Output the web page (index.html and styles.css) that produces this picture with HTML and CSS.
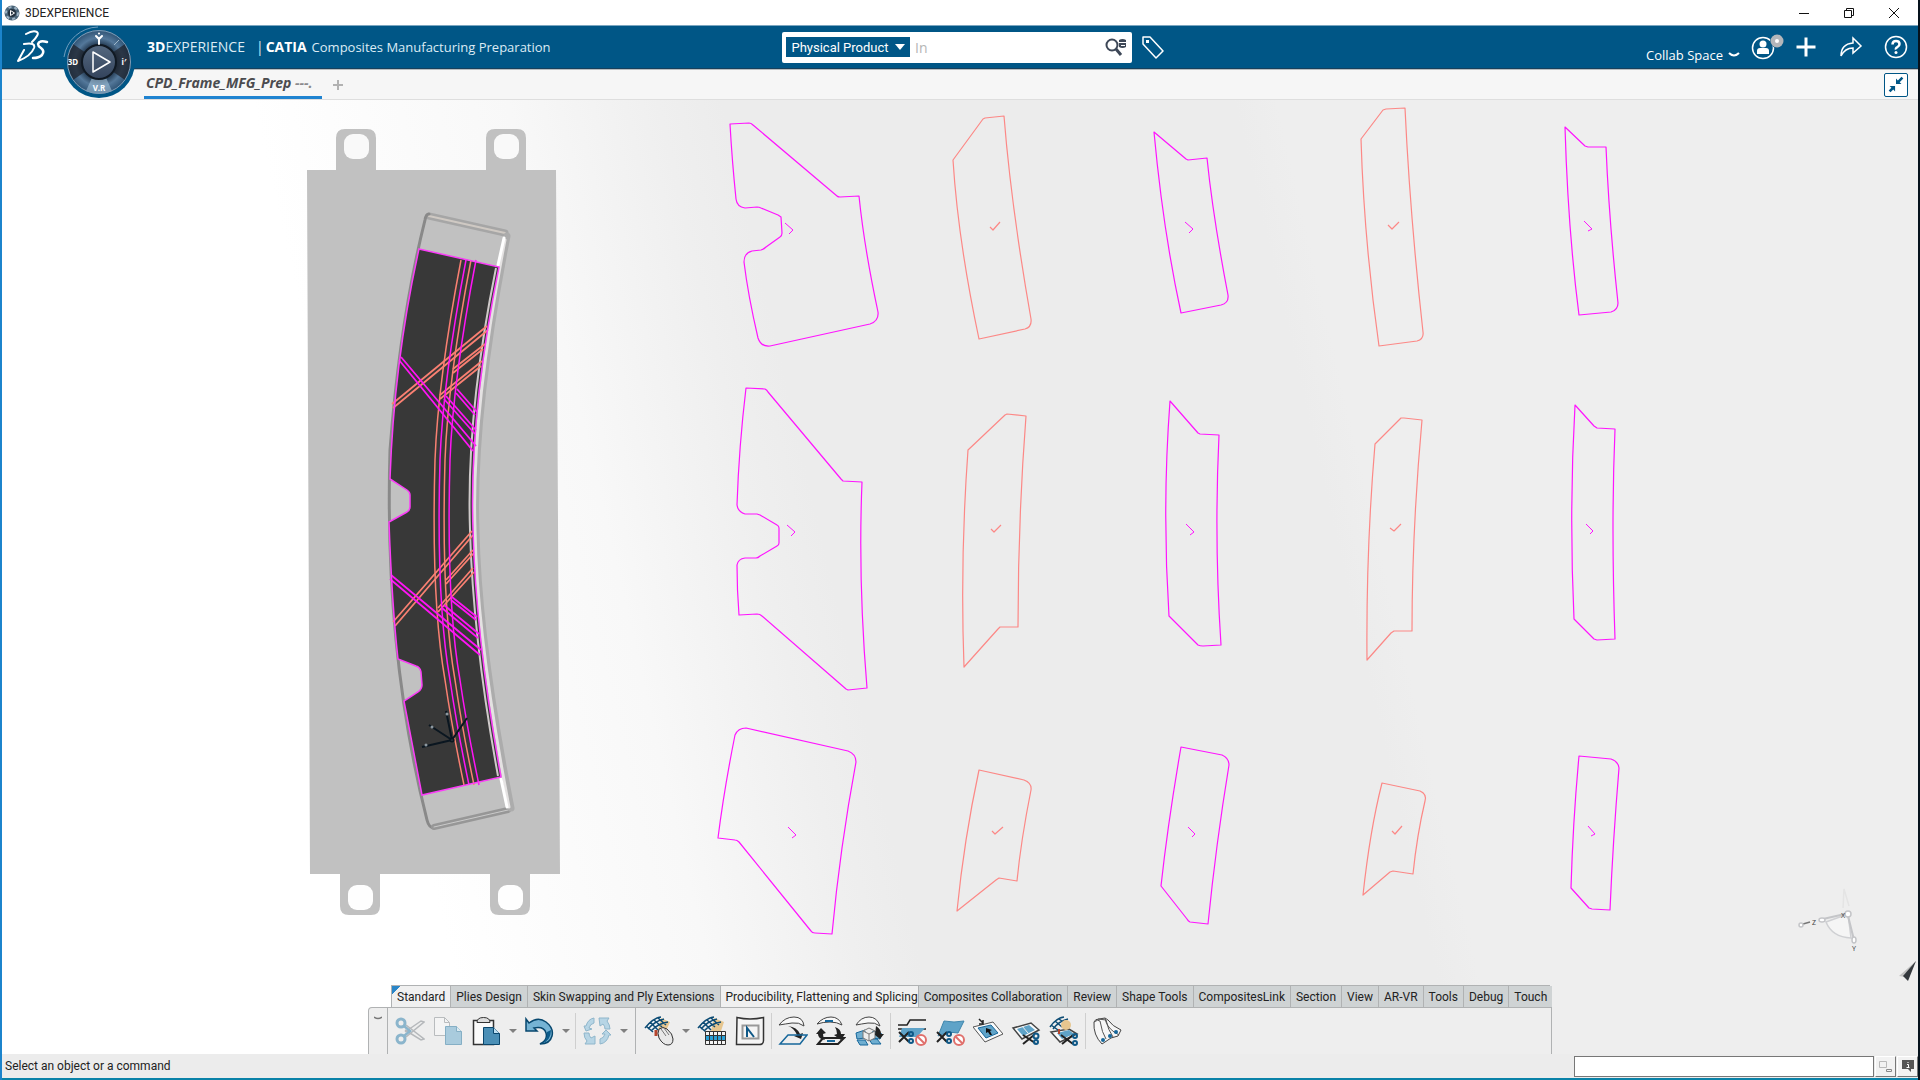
FILE: index.html
```
<!DOCTYPE html>
<html lang="en">
<head>
<meta charset="utf-8">
<title>3DEXPERIENCE</title>
<link rel="stylesheet" href="styles.css">
</head>
<body>
<div class="titlebar">
  <svg class="app-icon" viewBox="0 0 16 16"><circle cx="8" cy="8" r="7.500" fill="#4a6478"/><circle cx="8" cy="8" r="6" fill="none" stroke="#9fb4c4" stroke-width="2" stroke-dasharray="3 3"/><circle cx="8" cy="8" r="4" fill="#23313f"/><path d="M6.500 5.500l4 2.500l-4 2.500z" fill="none" stroke="#fff"/></svg>
  <span class="window-title">3DEXPERIENCE</span>
  <button class="win-btn" aria-label="Minimize"><svg viewBox="0 0 12 12"><path d="M1 6.500h10" stroke="#111"/></svg></button>
  <button class="win-btn" aria-label="Restore"><svg viewBox="0 0 12 12" fill="none" stroke="#111"><path d="M1.500 3.500h7v7h-7zM3.500 3.500v-2h7v7h-2"/></svg></button>
  <button class="win-btn" aria-label="Close"><svg viewBox="0 0 12 12"><path d="M1 1l10 10M11 1l-10 10" stroke="#111"/></svg></button>
</div>

<header class="topbar">
  <svg class="ds-logo" viewBox="0 0 32 34" fill="none" stroke="#fff" stroke-linecap="round" stroke-linejoin="round"><path d="M9 4q7-4 11-2q3 2-5 10" stroke-width="2"/><path d="M7 14q12-2 10 4q-3 8-16 13l6-11" stroke-width="2"/><path d="M30 12q-8-2-9 2q0 2 3 4q4 3 1 7q-3 3-9 3" stroke-width="2.500"/></svg>
  <button class="compass" aria-label="Compass">
    <svg viewBox="0 0 74 74">
      <defs>
        <radialGradient id="ring" cx=".5" cy=".5" r=".5"><stop offset=".5" stop-color="#1c3046"/><stop offset=".75" stop-color="#54789a"/><stop offset="1" stop-color="#2f5273"/></radialGradient>
        <linearGradient id="core" x1="0" y1="0" x2="0" y2="1"><stop offset="0" stop-color="#55687f"/><stop offset="1" stop-color="#33435c"/></linearGradient>
      </defs>
      <path d="M1 37a36 36 0 0 0 72 0z" fill="#005686"/>
      <path d="M2 32A35 35 0 0 1 36 2" fill="none" stroke="#6f9dbd"/>
      <circle cx="37" cy="37" r="32" fill="url(#ring)"/>
      <path d="M37 37L11 19A32 32 0 0 0 11 55zM37 37L63 19A32 32 0 0 1 63 55z" fill="#1d222b" opacity=".75"/>
      <path d="M37 37L24 66A32 32 0 0 0 50 66z" fill="#a9c8de" opacity=".55"/>
      <circle cx="37" cy="37" r="31.500" fill="none" stroke="#7b9db9"/>
      <circle cx="37" cy="37" r="17" fill="url(#core)" stroke="#101923" stroke-width="2"/>
      <path d="M31 27l17 10l-17 10z" fill="none" stroke="#fff" stroke-width="1.500" stroke-linejoin="round"/>
      <g class="compass-text"><text x="37" y="66">V.R</text><text x="11" y="40">3D</text><text x="62" y="40">i&#8242;</text></g>
      <path d="M37 8.500v0M34 11l3 3l3-3M37 14v5" stroke="#fff" stroke-width="2" fill="none" stroke-linecap="round"/>
      <path d="M52 20l5-5" stroke="#9fb6c8" stroke-width="1"/>
    </svg>
  </button>
  <h1 class="brand"><span><b>3D</b>EXPERIENCE</span> <span class="bar">|</span><b>CATIA</b> <span class="app-name">Composites Manufacturing Preparation</span></h1>
  <form class="search">
    <button type="button" class="scope">Physical Product <svg viewBox="0 0 10 6"><path d="M0 0h10l-5 6z" fill="#fff"/></svg></button>
    <input type="text" placeholder="In" aria-label="Search">
    <button type="button" class="find" aria-label="Find"><svg viewBox="0 0 22 20"><circle cx="7" cy="8" r="5.500" fill="none" stroke="#3d4757" stroke-width="2"/><path d="M11 12l5 6" stroke="#3d4757" stroke-width="3"/><path d="M14 3q3.500-2 7 0v7q-3.500 2-7 0z" fill="#3d4757"/><path d="M14 5.500h7M16 8.500h4" stroke="#fff"/></svg></button>
  </form>
  <button class="icon-btn tag" aria-label="Tags"><svg viewBox="0 0 24 24"><path d="M2 2h7l13 14l-7 7l-13-14z" fill="none" stroke="#fff" stroke-width="1.500" stroke-linejoin="round"/><path d="M5 5h3v3h-3z" fill="#fff"/></svg></button>
  <div class="account">
    <button class="space">Collab Space <svg viewBox="0 0 12 6"><path d="M1 1q5 5 10 0" fill="none" stroke="#fff" stroke-width="2"/></svg></button>
    <button class="icon-btn user" aria-label="Account"><svg viewBox="0 0 34 28"><circle cx="13" cy="15" r="10.500" fill="none" stroke="#fff" stroke-width="1.500"/><circle cx="13" cy="11" r="3.500" fill="#fff"/><path d="M7 21v-3q0-3 3-3h6q3 0 3 3v3z" fill="#fff"/><circle cx="27" cy="8" r="7" fill="#005686"/><circle cx="27" cy="8" r="6.500" fill="#b4b6ba"/><circle cx="27" cy="8" r="2" fill="#fff"/></svg></button>
    <button class="icon-btn" aria-label="Add"><svg viewBox="0 0 24 24"><path d="M12 2.500v19M2.500 12h19" stroke="#fff" stroke-width="3"/></svg></button>
    <button class="icon-btn" aria-label="Share"><svg viewBox="0 0 24 24"><path d="M2 21q0-12 12-13v-5l8 8l-8 7v-5q-8 0-12 8z" fill="none" stroke="#fff" stroke-width="1.500"/></svg></button>
    <button class="icon-btn" aria-label="Help"><svg viewBox="0 0 24 24"><circle cx="12" cy="12" r="10.500" fill="none" stroke="#fff" stroke-width="1.500"/><path d="M8.500 9.500q0-3.500 3.500-3.500t3.500 3q0 2-2 3t-1.500 2.500" fill="none" stroke="#fff" stroke-width="2.500"/><circle cx="12" cy="17.500" r="1.500" fill="#fff"/></svg></button>
  </div>
</header>

<nav class="doc-tabs">
  <a class="doc-tab" href="#">CPD_Frame_MFG_Prep <span>---.</span></a>
  <button class="new-tab" aria-label="New tab"><svg viewBox="0 0 10 10"><path d="M5 0v10M0 5h10" stroke="#b2b2b2" stroke-width="2"/></svg></button>
  <button class="collapse" aria-label="Collapse"><svg viewBox="0 0 24 24" fill="#005686"><path d="M12 5v6h6l-2-2l4-4l-2-2l-4 4zM11 19v-6h-6l2 2l-3 3l2 2l3-3z"/></svg></button>
</nav>

<main class="stage">
  <svg class="scene" viewBox="2 100 1916 954" preserveAspectRatio="xMinYMin slice" aria-label="3D view">
    <defs>
      <path id="band" d="M461 260Q438 380 435 460Q431 600 445 680Q452 728 464 785"/>
      <path id="ply" d="M419 249L499 267Q469 415 473 530Q476 640 501 777L422 795Q412 742 404 701L418 692Q422 689 422 685L421 672Q420 667 416 666L398 659Q392 605 389 522L407 512Q410 510 410 507V495Q410 492 407 490L390 479Q394 362 419 249z"/>
    </defs>
    <!-- tool plate with four lugs -->
    <g fill="#c1c1c1">
      <path d="M307 170H336V138Q336 129 345 129H367Q376 129 376 138V170H486V138Q486 129 495 129H517Q526 129 526 138V170H556L560 874H530V906Q530 915 521 915H499Q490 915 490 906V874H380V906Q380 915 371 915H349Q340 915 340 906V874H310z"/>
    </g>
    <g fill="#f9f9f9"><rect x="344" y="134" width="25" height="25" rx="9"/><rect x="494" y="134" width="25" height="25" rx="9"/></g>
    <g fill="#fefefe"><rect x="348" y="885" width="25" height="25" rx="9"/><rect x="498" y="885" width="25" height="25" rx="9"/></g>
    <!-- frame mould -->
    <g fill="none" stroke-linejoin="round" stroke-linecap="round">
      <path d="M429 216L505 233" stroke="#a6a6a6" stroke-width="7"/>
      <path d="M429 216L505 233" stroke="#cfc9c3" stroke-width="2"/>
      <path d="M429 214Q426 214 425 220Q400 320 390 450Q384 650 427 820Q429 828 434 828" stroke="#898989" stroke-width="3"/>
      <path d="M434 827L508 810" stroke="#979797" stroke-width="6"/>
      <path d="M434 827L508 810" stroke="#cacaca"/>
      <path d="M507 236Q472 415 476 530Q478 640 511 808" stroke="#acacac" stroke-width="7"/>
      <path d="M505 240Q471 415 475 530Q477 640 509 807" stroke="#e4e2e2" stroke-width="3"/>
      <path d="M504 238L498 265M507 807L501 779" stroke="#fff" stroke-width="3"/>
    </g>
    <use href="#ply" fill="#383838"/>
    <path d="M496 268Q466 415 470 530Q473 640 498 776" fill="none" stroke="#cfcaca" stroke-width="2"/>
    <g fill="none" stroke="#fa8072">
      <g stroke-width="1.500"><use href="#band"/><use href="#band" x="10"/></g>
      <path stroke-width="1.800" d="M392 404L487 326M393 408L488 330M453 369L485 344M453 373L483 349M440 395L482 361M440 399L481 366M393 622L472 531M395 626L473 535M446 580L473 550M446 584L474 553M438 608L473 568M438 612L474 572"/>
    </g>
    <g fill="none" stroke="#ff14f5">
      <g stroke-width="1.500"><use href="#band" x="5"/><use href="#band" x="15"/></g>
      <path stroke-width="1.800" d="M401 357L476 446M399 360L473 451M457 389L477 412M456 393L475 415M446 396L476 430M444 399L475 434M391 575L481 650M390 579L480 655M452 597L477 617M451 600L476 620M444 605L479 634M442 608L478 638"/>
      <use href="#ply" stroke="#fb3cf8" stroke-width="1.500"/>
    </g>
    <!-- local axis system -->
    <g stroke="#0a1620" stroke-width="2" fill="#717c85"><path d="M452 740L446 711M452 740L429 725M452 740L422 747M452 740L467 718"/><circle cx="452" cy="740" r="1.500"/><path d="M447 714v0M432 727v0M426 745v0" stroke="#8d98a0" stroke-width="3" stroke-linecap="round"/></g>

    <!-- flattened plies -->
    <g fill="none" stroke="#ff14ff" stroke-width="1.200" stroke-linejoin="round">
      <path d="M730 124L749 123Q751 123 753 125L837 196Q838 197 840 197L859 196Q864 246 878 312Q879 321 870 324L770 346Q761 347 758 338Q748 295 744 262Q744 253 752 251L761 250Q764 249 766 247L780 237Q782 236 782 233L781 217L778 215L761 208Q759 207 757 207L745 208Q737 207 736 199Q732 160 730 124z"/>
      <path d="M1154 132L1186 159L1188 160L1207 158Q1213 217 1228 295Q1229 303 1221 305L1181 313Q1163 230 1154 132z"/>
      <path d="M746 388L765 389Q767 390 768 392L841 479L843 481L862 482Q858 580 867 688L848 690L846 689L762 616Q760 614 757 614L739 615Q737 590 737 565Q738 559 745 558H756Q758 558 760 556L777 546Q779 545 779 543V528Q779 526 777 525L760 515L757 514H745Q738 512 737 505Q739 446 746 388z"/>
      <path d="M1170 401L1198 433L1200 434L1219 435Q1214 540 1221 645L1203 646Q1200 646 1198 645L1169 616Q1162 508 1170 401z"/>
      <path d="M746 728L848 751Q856 754 856 762Q840 848 832 934L815 933Q812 933 811 931L739 842Q737 840 735 840L718 838Q724 790 735 735Q738 728 746 728z"/>
      <path d="M1181 747L1222 755Q1229 758 1229 765Q1216 844 1208 924L1190 922Q1188 921 1187 919L1161 886Q1168 822 1181 747z"/>
      <path d="M1565 127L1585 146L1588 147L1606 147Q1609 220 1618 303Q1618 310 1611 312L1579 315Q1568 230 1565 127z"/>
      <path d="M1575 405L1594 426L1597 428L1615 429Q1611 525 1615 639L1597 640L1594 639L1574 619Q1569 510 1575 405z"/>
      <path d="M1579 756L1611 759Q1618 761 1619 768Q1613 840 1610 910L1592 909L1589 908L1571 888Q1573 820 1579 756z"/>
      <path stroke-width="1" d="M785 223L793 230L789 234M1185 222L1193 229L1189 233M787 525L795 532L791 536M1186 524L1194 532L1190 535M788 827L796 835L792 838M1188 827L1195 834L1192 837M1584 221L1592 229L1588 231M1586 524L1593 531L1590 534M1588 826L1595 834L1591 836"/>
    </g>
    <g fill="none" stroke="#fc8886" stroke-width="1.200" stroke-linejoin="round">
      <path d="M953 160L983 119L985 118L1004 116Q1011 205 1031 319Q1032 327 1025 329L979 339Q958 240 953 160z"/>
      <path d="M968 450L1005 415L1007 414L1026 416Q1018 520 1018 627H1000L998 629L964 667Q960 560 968 450z"/>
      <path d="M979 770L1024 780Q1032 783 1031 790Q1021 840 1017 881L999 878L996 880L957 911Q964 840 979 770z"/>
      <path d="M1361 139L1383 110L1386 109L1405 108Q1410 215 1423 332Q1424 339 1417 341L1379 346Q1364 240 1361 139z"/>
      <path d="M1375 444L1401 418L1404 418L1422 420Q1412 530 1412 631H1394L1391 633L1367 660Q1366 550 1375 444z"/>
      <path d="M1382 783L1420 791Q1427 794 1425 801Q1417 835 1413 874L1393 871L1390 872L1363 895Q1370 830 1382 783z"/>
      <path d="M990 227L993 230L1000 222M991 529L994 532L1001 525M992 831L995 834L1003 827M1388 225L1392 229L1399 222M1390 528L1394 531L1401 524M1392 831L1395 834L1402 826"/>
    </g>
    <!-- view orientation triad -->
    <g fill="none" stroke="#c4c5c8" stroke-width="1.500">
      <path d="M1826 922Q1832 937 1851 938L1848 914z" fill="#f5f5f5" stroke="#cfd0d3"/>
      <path d="M1823 919L1845 914" stroke-width="2"/><path d="M1848 916L1854 940" stroke-width="2"/>
      <path d="M1843 908L1844 889L1849 906" stroke="#e4e4e4"/>
      <path d="M1803 924L1810 922" stroke="#777"/>
      <circle cx="1801" cy="925" r="2" fill="#fff"/><circle cx="1848" cy="914" r="3" fill="#fff"/><ellipse cx="1822" cy="920" rx="3" ry="2" fill="#fff"/><ellipse cx="1854" cy="940" rx="2" ry="3" fill="#fff"/>
    </g>
    <g class="axis-label"><text x="1812" y="925">Z</text><text x="1841" y="918">X</text><text x="1852" y="951">Y</text></g>
    <path d="M1916 961L1899 976L1905 977z" fill="#c2c2c2"/><path d="M1916 961L1903 976L1908 981z" fill="#34383d"/>
  </svg>

  <section class="actionbar">
    <nav class="sections">
      <button class="section active first">Standard</button>
      <button class="section">Plies Design</button>
      <button class="section">Skin Swapping and Ply Extensions</button>
      <button class="section active long">Producibility, Flattening and Splicing</button>
      <button class="section">Composites Collaboration</button>
      <button class="section">Review</button>
      <button class="section">Shape Tools</button>
      <button class="section">CompositesLink</button>
      <button class="section">Section</button>
      <button class="section">View</button>
      <button class="section">AR-VR</button>
      <button class="section">Tools</button>
      <button class="section">Debug</button>
      <button class="section">Touch</button>
    </nav>
    <div class="tools">
      <button class="handle" aria-label="Hide toolbar"><svg viewBox="0 0 8 4"><path d="M0 1q4 3 8 0" fill="none" stroke="#777" stroke-width="1.500"/></svg></button>
      <button class="tool" aria-label="Cut"><svg viewBox="0 0 30 30" fill="none"><path d="M11 9L29 23L26 24L10 14M11 21L29 6L26 5L10 16" stroke="#b5b8bb" stroke-width="1.500"/><circle cx="6" cy="7" r="4" stroke="#8bb5cc" stroke-width="3"/><circle cx="6" cy="23" r="4" stroke="#8bb5cc" stroke-width="3"/><path d="M9 10l6 5l-6 5" stroke="#8bb5cc" stroke-width="2.500"/></svg></button>
      <button class="tool" aria-label="Copy"><svg viewBox="0 0 30 30"><path d="M1.500 1.500h10l5 5v13h-15z" fill="#f4f4f4" stroke="#b9bcbe"/><path d="M11.500 1.500v5h5" fill="none" stroke="#b9bcbe"/><path d="M12.500 10.500h11l5 5v13h-16z" fill="#a9cbdd" stroke="#85afc5"/><path d="M23.500 10.500v5h5" fill="#dcebf2" stroke="#85afc5"/></svg></button>
      <button class="tool" aria-label="Paste"><svg viewBox="0 0 30 30"><path d="M2.500 4.500h20v24h-20z" fill="#fafafa" stroke="#333" stroke-width="1.500"/><path d="M6 6.500q0-5 6.500-5t6.500 5z" fill="#ddd" stroke="#333"/><path d="M12.500 11.500h10l6 6v11h-16z" fill="#4b8fb6" stroke="#0a466c"/><path d="M22.500 11.500v6h6" fill="#bfe0f1" stroke="#0a466c"/></svg></button>
      <button class="more" aria-label="Paste options"><svg viewBox="0 0 8 4"><path d="M0 0h8l-4 4z"/></svg></button>
      <button class="tool" aria-label="Undo"><svg viewBox="0 0 30 30"><path d="M2 3l3 4q9-7 17-1t6 14t-12 8q8-4 6-11t-12-5l3 3H2z" fill="#75b3d4" stroke="#07476e" stroke-width="1.500"/><path d="M27 14q0 11-10 14q7-4 6-12z" fill="#0d5c8b"/></svg></button>
      <button class="more" aria-label="Undo options"><svg viewBox="0 0 8 4"><path d="M0 0h8l-4 4z"/></svg></button>
      <span class="rule"></span>
      <button class="tool" aria-label="Update"><svg viewBox="0 0 30 30"><g fill="#b7d5e5" stroke="#8fb6cb"><path d="M12 2v5q-4 1-5 5l3 1l-6 2l-2-5h2q2-7 8-8z"/><path d="M17 2h10l-2 3q3 4 3 8h-5q0-3-2-5l-3 2z"/><path d="M18 28v-5q4-1 5-5h-3l4-4l5 5h-2q-2 8-9 9z"/><path d="M13 28H3l2-3q-3-3-3-8h5q0 3 2 5l4-2z"/></g></svg></button>
      <button class="more" aria-label="Update options"><svg viewBox="0 0 8 4"><path d="M0 0h8l-4 4z"/></svg></button>
      <span class="rule full"></span>
      <button class="tool" aria-label="Hand draping"><svg viewBox="0 0 30 30"><path d="M1 13Q8 1 17 1l10 4l-6 10l-9 1z" fill="#f1f5f7"/><path d="M17 2l9 4l-4 9l-8-1z" fill="#e6c68f"/><path d="M1 12Q9 2 17 1M4 13Q11 5 20 3M7 15Q13 8 24 6M2 10l7 6M6 6l8 8M10 4l8 7M14 2l8 7" stroke="#0c4b74" stroke-width="1.500" fill="none"/><path d="M12 14v6" stroke="#b5452d" stroke-width="3"/><path d="M15 13q4-3 8 0q6 5 6 10q0 6-5 6t-9-7q-2-5 0-9z" fill="#e8e8e8" stroke="#333"/><path d="M17 13l5 7M20 12l5 7" stroke="#777"/></svg></button>
      <button class="more" aria-label="Draping options"><svg viewBox="0 0 8 4"><path d="M0 0h8l-4 4z"/></svg></button>
      <button class="tool" aria-label="Producibility table"><svg viewBox="0 0 30 30"><path d="M17 2l10 4l-3 9h-10z" fill="#e6c68f"/><path d="M1 12Q9 2 17 1M4 13Q11 5 20 3M7 15Q13 8 24 6M2 10l7 6M6 6l8 8M10 4l8 7M14 2l8 7" stroke="#0c4b74" stroke-width="1.500" fill="none"/><path d="M8.500 15.500h20v13h-20z" fill="#f5f5f5" stroke="#333"/><path d="M9 20h19v4H9z" fill="#2aa0d6"/><path d="M8 19.500h20M8 24.500h20M12.500 15v13M16.500 15v13M20.500 15v13M24.500 15v13" stroke="#333"/></svg></button>
      <button class="tool" aria-label="Flattening"><svg viewBox="0 0 30 30"><path d="M2 1.500q13 3 26.500 0v23q0 4-4 4H1.500z" fill="#f5f5f5" stroke="#333" stroke-width="1.500"/><path d="M7.500 9.500h16v13h-16z" fill="none" stroke="#999" stroke-width="2"/><path d="M12 21v-9l7 9" fill="none" stroke="#0f5887" stroke-width="2"/></svg></button>
      <span class="rule"></span>
      <button class="tool" aria-label="Flatten geometry"><svg viewBox="0 0 30 30"><path d="M1 9Q7 1 16 1t10 9q-5-4-12-3T1 9z" fill="#f8f8f8" stroke="#444"/><path d="M10 10q9 1 12 8l3-1l-2 6l-7-3l3-1q-3-7-9-9z" fill="#222"/><path d="M2 28l8-9h19l-7 9z" fill="none" stroke="#16679b" stroke-width="1.500"/></svg></button>
      <button class="tool" aria-label="Transfer geometry"><svg viewBox="0 0 30 30"><path d="M1 8Q7 1 15 1t11 8q-5-3-12-3T1 8z" fill="#f8f8f8" stroke="#444"/><path d="M9 5h8" stroke="#16679b" stroke-width="2"/><path d="M19 11q6 2 6 7h4l-4 6l-7-5l3-1q0-4-2-7zM9 24q-7-1-7-6h-2l5-6l5 5l-3 1q0 4 2 6z" fill="#222"/><path d="M2 28l5-6h21l-6 6z" fill="none" stroke="#222" stroke-width="2"/><path d="M11 25h8" stroke="#16679b" stroke-width="2"/></svg></button>
      <button class="tool" aria-label="Unfold body"><svg viewBox="0 0 30 30"><path d="M2 9Q7 1 15 1t11 9q-5-4-12-3T2 9z" fill="#f8f8f8" stroke="#444"/><path d="M2 17l9-3v8l-8 1zM19 15l9 3l-2 5l-8-1zM3 24h8l3 5h-8zM15 23h8l4 5h-9z" fill="#6faed0" stroke="#16679b"/><path d="M9 15l6-3l6 3v7l-6 3l-6-3zM9 15l6 3l6-3M15 18v7" fill="#eee" stroke="#777"/><path d="M22 10q5 3 5 8h3l-4 5l-5-4z" fill="#222"/></svg></button>
      <span class="rule"></span>
      <button class="tool" aria-label="No splice"><svg viewBox="0 0 30 30"><path d="M1 9h9l3-5h16M1 13h28" fill="none" stroke="#222" stroke-width="1.500"/><path d="M5 12h23l-8 9H2z" fill="#5fa3c8"/><path d="M2 16l10 10M2 26l10-10" stroke="#222" stroke-width="2"/><circle cx="14" cy="18" r="2" fill="none" stroke="#0f5887" stroke-width="2"/><circle cx="14" cy="25" r="2" fill="none" stroke="#0f5887" stroke-width="2"/><circle cx="24" cy="24" r="5" fill="#fff" stroke="#e0706c" stroke-width="2"/><path d="M20 20l8 8" stroke="#e0706c" stroke-width="2"/></svg></button>
      <button class="tool" aria-label="No cut zone"><svg viewBox="0 0 30 30"><path d="M9 5q10 2 20 0l-6 12q-10-2-20 3z" fill="#5fa3c8" stroke="#3f86ac"/><path d="M2 16l10 10M2 26l10-10" stroke="#222" stroke-width="2"/><circle cx="14" cy="18" r="2" fill="none" stroke="#0f5887" stroke-width="2"/><circle cx="14" cy="25" r="2" fill="none" stroke="#0f5887" stroke-width="2"/><circle cx="24" cy="24" r="5" fill="#fff" stroke="#e0706c" stroke-width="2"/><path d="M20 20l8 8" stroke="#e0706c" stroke-width="2"/></svg></button>
      <button class="tool" aria-label="Place ply"><svg viewBox="0 0 30 30"><path d="M0 11l20-5l10 12l-18 8z" fill="#fbfbfb" stroke="#555"/><path d="M5 12l13-3l7 8l-12 5z" fill="#5fa3c8" stroke="#16679b"/><path d="M6 3l4 4M10 4v4h-4" stroke="#222" stroke-width="1.500" fill="none"/><path d="M13 12l6 2l-2 1l2 4h-2l-2-3l-2 1z" fill="#111"/></svg></button>
      <button class="tool" aria-label="Cut ply"><svg viewBox="0 0 30 30"><path d="M2 12l18-5l8 7l-17 9z" fill="#fbfbfb" stroke="#444" stroke-width="1.500"/><path d="M6 13l12-4l6 5l-12 6z" fill="#5fa3c8"/><path d="M11 10l6 7" stroke="#eee"/><path d="M12 19l12 8M12 28l11-9" stroke="#222" stroke-width="2"/><circle cx="25" cy="20" r="2.500" fill="none" stroke="#0f5887" stroke-width="2"/><circle cx="25" cy="26" r="2" fill="none" stroke="#0f5887" stroke-width="2"/></svg></button>
      <button class="tool" aria-label="Splice draping"><svg viewBox="0 0 30 30"><path d="M2 16l18-3l8 5l-17 8z" fill="#fbfbfb" stroke="#444" stroke-width="1.500"/><path d="M8 17l12-3l5 4l-12 5z" fill="#5fa3c8"/><path d="M1 11Q7 2 15 1M4 13Q10 5 19 3M2 9l7 5M6 5l7 6M10 3l7 5" stroke="#0c4b74" stroke-width="1.500" fill="none"/><circle cx="17" cy="9" r="5" fill="#e6c68f"/><path d="M10 13v5" stroke="#b5452d" stroke-width="2"/><path d="M12 19l12 9M13 28l11-9" stroke="#222" stroke-width="2"/><circle cx="26" cy="20" r="2" fill="none" stroke="#0f5887" stroke-width="2"/><circle cx="26" cy="27" r="2" fill="none" stroke="#0f5887" stroke-width="2"/></svg></button>
      <span class="rule"></span>
      <button class="tool" aria-label="Ply on mould"><svg viewBox="0 0 30 30"><path d="M2 6q1-3 5-3l6-1l3 2q4 6 13 10l-3 6l-7 2l-9 6q-9-9-8-22z" fill="#f6f6f6" stroke="#444"/><path d="M2 6q4-3 6-1q2 12 6 18M6 3l8 1q2 10 7 17M13 2q1 8 9 14l5 3" fill="none" stroke="#555"/><circle cx="11" cy="24" r="2" fill="#16679b"/><circle cx="18" cy="20" r="2" fill="#16679b"/><circle cx="24" cy="16" r="2" fill="#16679b"/></svg></button>
    </div>
  </section>
</main>

<footer class="statusbar">
  <label for="cmd">Select an object or a command</label>
  <input id="cmd" type="text">
  <button aria-label="Windows"><svg viewBox="0 0 16 16" fill="none" stroke="#b9b9b9"><path d="M1.500 3.500h7v6h-7z"/><path d="M8.500 11.500h5v2h-5z" stroke="#888"/></svg></button>
  <button class="raised" aria-label="Messages"><svg viewBox="0 0 16 16"><path d="M2 2h12v9h-3v3l-3-3H2z" fill="#555"/><path d="M8 4v1M7 6.500h1.500v3M6.500 9.500h3" stroke="#fff" fill="none"/></svg></button>
</footer>
</body>
</html>
```
FILE: styles.css
```
* { box-sizing: border-box; }

body {
  margin: 0;
  min-height: 100vh;
  display: flex;
  flex-direction: column;
  border-left: 2px solid #1c84cc;
  border-right: 2px solid #06121c;
  background: #fff;
  font-family: Roboto, "Open Sans", sans-serif;
  font-size: 12px;
  color: #222;
}

button {
  margin: 0;
  padding: 0;
  border: 0;
  background: none;
  font: inherit;
  color: inherit;
  display: flex;
  align-items: center;
  justify-content: center;
  flex: none;
}

svg { display: block; }
h1 { margin: 0; }

/* window title bar */
.titlebar { display: flex; align-items: center; height: 25px; padding: 0 2px; }
.app-icon { width: 16px; height: 16px; }
.window-title { margin-left: 5px; flex: 1; }
.win-btn { width: 45px; height: 24px; }
.win-btn svg { width: 12px; height: 12px; }

/* application header */
.topbar {
  position: relative;
  display: flex;
  align-items: center;
  height: 44px;
  background: #005686;
  border-top: 1px solid #7ba6c0;
  border-bottom: 1px solid #17405c;
  color: #fff;
  font-family: "Open Sans", sans-serif;
}
.ds-logo { width: 32px; height: 34px; margin-left: 15px; }
.compass { position: absolute; left: 60px; top: -1px; z-index: 2; }
.compass svg { width: 74px; height: 74px; }
.compass-text { fill: #fff; font: bold 8px "Noto Sans", sans-serif; text-anchor: middle; }
.brand {
  display: flex;
  width: 733px;
  padding-left: 98px;
  font-size: 14px;
  font-weight: 400;
  line-height: 20px;
  color: #dcebf4;
  white-space: nowrap;
}
.brand b { color: #fff; }
.brand .bar { margin: 0 2px 0 11px; }
.app-name { margin-left: 5px; font-size: 13px; }
.search {
  display: flex;
  align-items: center;
  width: 350px;
  height: 31px;
  padding: 0 5px 0 4px;
  background: #fff;
  border-radius: 2px;
}
.scope { height: 20px; width: 124px; gap: 6px; background: #005686; font: 13px Roboto, sans-serif; white-space: nowrap; }
.scope svg { width: 10px; height: 6px; }
.search input {
  flex: 1;
  min-width: 0;
  height: 24px;
  padding: 0 5px;
  border: 0;
  background: none;
  font: 14px "Open Sans", sans-serif;
}
.search input::placeholder { color: #b5b5b5; }
.find svg { width: 22px; height: 20px; }
.icon-btn svg { width: 24px; height: 24px; }
.tag { margin-left: 9px; }
.account { display: flex; align-items: center; margin-left: auto; padding-right: 10px; gap: 21px; }
.space { gap: 5px; font-size: 13px; padding-top: 15px; }
.space svg { width: 12px; height: 6px; }
.user { margin: 0 -11px; }
.user svg { width: 34px; height: 28px; }

/* document tabs */
.doc-tabs {
  display: flex;
  align-items: stretch;
  height: 31px;
  padding-left: 142px;
  background: #f6f6f6;
  border-top: 1px solid #b8bcbe;
  border-bottom: 1px solid #dedede;
}
.doc-tab {
  width: 178px;
  padding-left: 2px;
  border-bottom: 3px solid #1f83d0;
  font: italic bold 14px/26px "Open Sans", sans-serif;
  color: #4b4b4f;
  text-decoration: none;
  white-space: nowrap;
}
.doc-tab span { color: #8a8a8d; }
.new-tab { width: 32px; }
.new-tab svg { width: 10px; height: 10px; }
.collapse { align-self: center; width: 24px; height: 24px; margin-left: auto; margin-right: 10px; border: 1px solid #005686; border-radius: 2px; background: #fff; }
.collapse svg { width: 22px; height: 22px; }

/* 3D view with the action bar over its lower edge */
.stage {
  flex: 1;
  display: grid;
  grid-template: minmax(0, 1fr) / minmax(0, 1fr);
  background: linear-gradient(77deg, #fff 22%, #f8f8f8 34%, #efefef 41%, #ececec 44%, #ececec 68%, #eee 70%);
}
.scene { grid-area: 1 / 1; width: 100%; height: 100%; min-height: 0; contain: size; }
.axis-label { fill: #444; font: 7px "Noto Sans", sans-serif; }

.actionbar { grid-area: 1 / 1; align-self: end; margin-left: 366px; width: 1184px; }
.sections { display: flex; height: 22px; margin: 0 2px 0 23px; border: 1px solid #b0b2b3; border-bottom: 0; }
.section {
  flex: 1 1 auto;
  padding: 0 5px;
  background: #cfd3d4;
  border-right: 1px solid #b0b2b3;
  white-space: nowrap;
}
.section:last-child { border-right: 0; }
.section.active { background: #f0f0f0; }
.section.first { background: linear-gradient(135deg, #2a86c8 6px, #f0f0f0 6px); }
.section.long { padding-right: 0; }
.tools {
  display: flex;
  align-items: center;
  height: 47px;
  background: #eee;
  border: 1px solid #b0b2b3;
  border-bottom: 0;
  border-top-left-radius: 4px;
}
.handle { align-self: stretch; width: 19px; margin-right: 3px; padding-top: 8px; align-items: flex-start; border-right: 1px solid #b0b2b3; }
.handle svg { width: 8px; height: 4px; }
.tool { width: 38px; height: 38px; }
.tool svg { width: 30px; height: 30px; }
.more { width: 15px; height: 38px; }
.more svg { width: 8px; height: 4px; fill: #808080; }
.rule { width: 1px; height: 36px; margin: 0 2px; background: #cfcfcf; }
.rule.full { height: 100%; margin: 0 4px; background: #b0b2b3; }

/* status bar */
.statusbar {
  display: flex;
  align-items: center;
  height: 26px;
  padding-left: 3px;
  background: #ececec;
  border-bottom: 2px solid #0a82a8;
}
.statusbar input { width: 300px; height: 21px; margin-left: auto; border: 1px solid #777; background: #fff; }
.statusbar button { width: 21px; height: 21px; margin-left: 1px; background: #f2f2f2; border: 1px solid #fff; border-right-color: #777; border-bottom-color: #777; }
.statusbar svg { width: 16px; height: 16px; }
```
